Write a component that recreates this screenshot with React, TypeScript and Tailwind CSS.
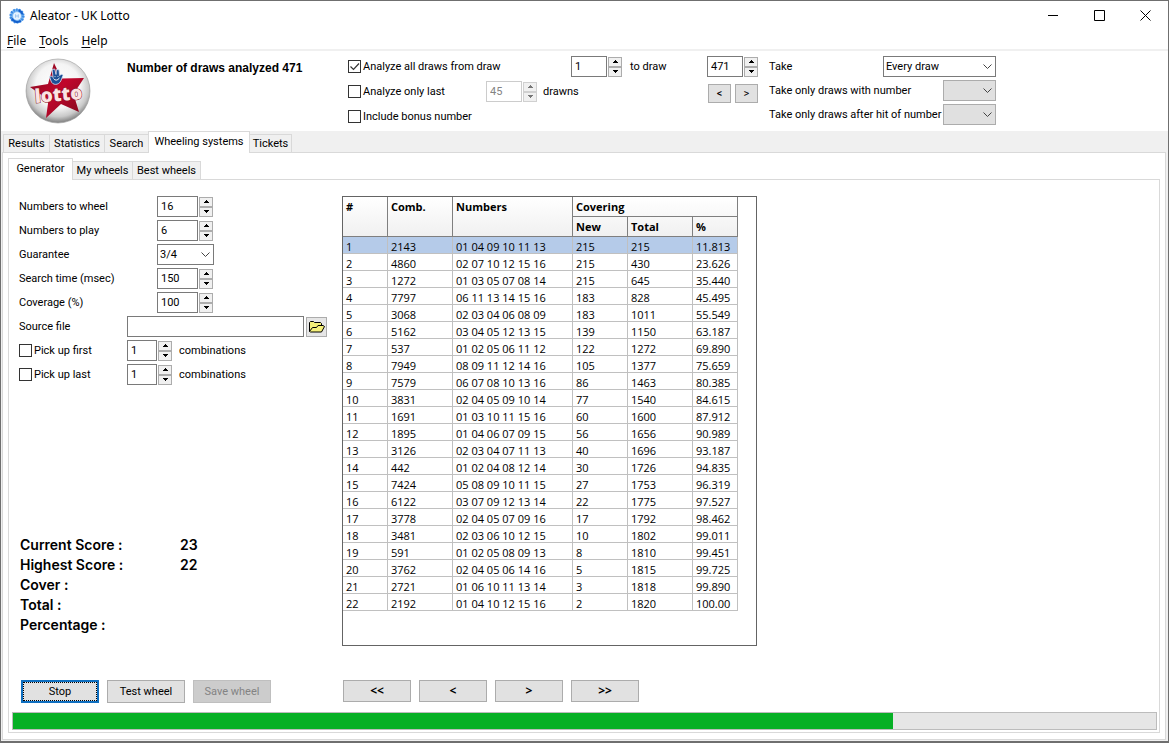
import { ReactNode, useState } from "react";
import { clsx } from "clsx";

const menus = ["File", "Tools", "Help"];

const mainTabs = [
  { name: "Results", width: "w-[47px]" },
  { name: "Statistics", width: "w-[56px]" },
  { name: "Search", width: "w-[45px]" },
  { name: "Wheeling systems", width: "w-[102px]" },
  { name: "Tickets", width: "w-[43px]" },
];

const wheelTabs = [
  { name: "Generator", width: "w-[65px]" },
  { name: "My wheels", width: "w-[61px]" },
  { name: "Best wheels", width: "w-[69px]" },
];

const rows = [
  ["1", "2143", "01 04 09 10 11 13", "215", "215", "11.813"],
  ["2", "4860", "02 07 10 12 15 16", "215", "430", "23.626"],
  ["3", "1272", "01 03 05 07 08 14", "215", "645", "35.440"],
  ["4", "7797", "06 11 13 14 15 16", "183", "828", "45.495"],
  ["5", "3068", "02 03 04 06 08 09", "183", "1011", "55.549"],
  ["6", "5162", "03 04 05 12 13 15", "139", "1150", "63.187"],
  ["7", "537", "01 02 05 06 11 12", "122", "1272", "69.890"],
  ["8", "7949", "08 09 11 12 14 16", "105", "1377", "75.659"],
  ["9", "7579", "06 07 08 10 13 16", "86", "1463", "80.385"],
  ["10", "3831", "02 04 05 09 10 14", "77", "1540", "84.615"],
  ["11", "1691", "01 03 10 11 15 16", "60", "1600", "87.912"],
  ["12", "1895", "01 04 06 07 09 15", "56", "1656", "90.989"],
  ["13", "3126", "02 03 04 07 11 13", "40", "1696", "93.187"],
  ["14", "442", "01 02 04 08 12 14", "30", "1726", "94.835"],
  ["15", "7424", "05 08 09 10 11 15", "27", "1753", "96.319"],
  ["16", "6122", "03 07 09 12 13 14", "22", "1775", "97.527"],
  ["17", "3778", "02 04 05 07 09 16", "17", "1792", "98.462"],
  ["18", "3481", "02 03 06 10 12 15", "10", "1802", "99.011"],
  ["19", "591", "01 02 05 08 09 13", "8", "1810", "99.451"],
  ["20", "3762", "02 04 05 06 14 16", "5", "1815", "99.725"],
  ["21", "2721", "01 06 10 11 13 14", "3", "1818", "99.890"],
  ["22", "2192", "01 04 10 12 15 16", "2", "1820", "100.00"],
];

const scores = [
  ["Current Score :", "23"],
  ["Highest Score :", "22"],
  ["Cover :", ""],
  ["Total :", ""],
  ["Percentage :", ""],
];

interface SpinProps {
  id: string;
  label?: string;
  value: string;
  width: string;
  disabled?: boolean;
}

function Spin({ id, label, value, width, disabled }: SpinProps) {
  const [val, setVal] = useState(value);
  const step = (n: number) => setVal(String(Number(val) + n));
  const button = clsx(
    "flex h-[10px] w-[14px] items-center justify-center border bg-[#f0f0f0]",
    disabled ? "border-[#d0d0d0] text-[#777]" : "border-[#acacac] text-black"
  );

  return (
    <div className="flex items-center gap-px">
      <input
        id={id}
        aria-label={label}
        value={val}
        disabled={disabled}
        onChange={(e) => setVal(e.target.value)}
        className={clsx(
          "h-[21px] border bg-white px-[3px] outline-none",
          width,
          disabled ? "border-[#cccccc] text-[#838383]" : "border-[#7a7a7a]"
        )}
      />
      <div className="flex flex-col">
        <button
          className={button}
          aria-label="Increase"
          disabled={disabled}
          onClick={() => step(1)}
        >
          <svg width="5" height="3" viewBox="0 0 5 3" fill="currentColor">
            <path d="M2 0h1v1h1v1h1v1H0V2h1V1h1z" />
          </svg>
        </button>
        <button
          className={button}
          aria-label="Decrease"
          disabled={disabled}
          onClick={() => step(-1)}
        >
          <svg width="5" height="3" viewBox="0 0 5 3" fill="currentColor">
            <path d="M0 0h5v1H4v1H3v1H2V2H1V1H0z" />
          </svg>
        </button>
      </div>
    </div>
  );
}

interface DropProps {
  id: string;
  options: string[];
  width: string;
  disabled?: boolean;
}

function Drop({ id, options, width, disabled }: DropProps) {
  return (
    <div className={clsx("relative", width)}>
      <select
        id={id}
        disabled={disabled}
        className={clsx(
          "block h-[21px] w-full appearance-none border pl-[2px] pr-4 outline-none",
          disabled ? "border-[#acacac] bg-[#e0e0e0]" : "border-[#7a7a7a] bg-white"
        )}
      >
        {options.map((option) => (
          <option key={option}>{option}</option>
        ))}
      </select>
      <svg
        className="pointer-events-none absolute right-1 top-2"
        width="9"
        height="6"
        viewBox="0 0 9 6"
        fill="none"
        stroke="#444"
      >
        <path d="M.5.5l4 4 4-4" />
      </svg>
    </div>
  );
}

interface CheckProps {
  label: string;
  width?: string;
  initial?: boolean;
}

function Check({ label, width, initial = false }: CheckProps) {
  const [checked, setChecked] = useState(initial);

  return (
    <label className={clsx("relative flex items-center gap-[2px]", width)}>
      <input
        type="checkbox"
        checked={checked}
        onChange={() => setChecked(!checked)}
        className="size-[13px] shrink-0 appearance-none border border-[#333] bg-white"
      />
      {checked && (
        <svg
          className="pointer-events-none absolute left-0"
          width="13"
          height="13"
          viewBox="0 0 13 13"
          fill="none"
          stroke="#333"
          strokeWidth="1.2"
        >
          <path d="M2.5 6.5l3 3 5.5-6" />
        </svg>
      )}
      <span className="whitespace-nowrap">{label}</span>
    </label>
  );
}

interface TabsProps {
  tabs: { name: string; width: string }[];
  initial: string;
}

function Tabs({ tabs, initial }: TabsProps) {
  const [active, setActive] = useState(initial);

  return (
    <div role="tablist" className="flex items-end">
      {tabs.map(({ name, width }) => (
        <button
          key={name}
          role="tab"
          aria-selected={name === active}
          onClick={() => setActive(name)}
          className={clsx(
            "relative -mr-px whitespace-nowrap border border-[#d9d9d9] text-center",
            width,
            name === active
              ? "z-10 -mb-px h-[22px] border-b-0 bg-white pb-[2px]"
              : "h-[18px] border-b-0 bg-[#f0f0f0]"
          )}
        >
          {name}
        </button>
      ))}
    </div>
  );
}

function AppIcon() {
  return (
    <svg width="16" height="16" viewBox="0 0 16 16" fill="none">
      <circle cx="8" cy="8" r="5.4" stroke="#7db9f2" strokeWidth="3.6" />
      <circle
        cx="8"
        cy="8"
        r="6.3"
        stroke="#3b8be6"
        strokeWidth="2.6"
        strokeDasharray="1.6 1.2"
      />
      <path d="M2.800 10.500a6 6 0 0 0 9 2.200" stroke="#1660cc" strokeWidth="2" />
      <path d="M9.500 2.300a6 6 0 0 1 4 4" stroke="#1660cc" strokeWidth="2" />
      <circle cx="8" cy="8" r="3.8" fill="#e6f3ff" />
      <path d="M6.6 6.3v3.4M9.3 6.3v3.4M6.6 8h2.7" stroke="#9cc4ee" />
    </svg>
  );
}

function LottoLogo() {
  return (
    <svg width="66" height="66" viewBox="0 0 66 66" role="img" aria-label="Lotto">
      <defs>
        <radialGradient id="ball" cx="50%" cy="42%" r="56%">
          <stop offset="0" stopColor="#ffffff" />
          <stop offset=".62" stopColor="#f4f4f4" />
          <stop offset=".86" stopColor="#c9c9c9" />
          <stop offset="1" stopColor="#8c8c8c" />
        </radialGradient>
        <linearGradient id="star" x1="0" y1="0" x2="1" y2="1">
          <stop offset="0" stopColor="#7a0c1c" />
          <stop offset=".5" stopColor="#c1062c" />
          <stop offset="1" stopColor="#7d0a1c" />
        </linearGradient>
      </defs>
      <circle cx="33" cy="33" r="32" fill="url(#ball)" stroke="#999" strokeWidth=".6" />
      <path
        d="M29 5l7.500 15.500L59 20 48.500 36 54 54 36 46 21 60l2.500-18L5 29l18-3z"
        fill="url(#star)"
      />
      <path
        d="M24.500 18.500l2-.5 1.500 1.500-.8-8 2.600-.5 1.200 5.500.5-5 2.600.3.400 5.700 2.500-1.500 1 1.500-2.200 5.500c-2.200 4.500-8.500 4.500-9.800 0z"
        fill="#1d4f96"
        stroke="#dce9f7"
        strokeWidth=".8"
      />
      <path
        d="M28.500 20.500q2.500 3.500 6-.5M30 18.300v.8M33 17.900v.8"
        fill="none"
        stroke="#fff"
      />
      <text
        x="34"
        y="43"
        textAnchor="middle"
        transform="rotate(-5 34 43)"
        fontFamily="'Open Sans', sans-serif"
        fontWeight="800"
        fontSize="19"
        fill="#fbe3e3"
        stroke="#8a0f20"
        strokeWidth="1"
        paintOrder="stroke"
      >
        lotto
      </text>
    </svg>
  );
}

function WindowButton({ label, children }: { label: string; children: ReactNode }) {
  return (
    <button
      aria-label={label}
      className="flex h-[29px] w-[46px] items-center justify-center hover:bg-gray-200"
    >
      <svg width="11" height="11" viewBox="0 0 11 11" fill="none" stroke="#000">
        {children}
      </svg>
    </button>
  );
}

function TitleBar() {
  return (
    <div className="flex items-center justify-between pl-2 font-['Noto_Sans',sans-serif] text-[12px]">
      <div className="flex items-center gap-[5px]">
        <AppIcon />
        <span>Aleator - UK Lotto</span>
      </div>
      <div className="flex">
        <WindowButton label="Minimize">
          <path d="M0 5.500h10" />
        </WindowButton>
        <WindowButton label="Maximize">
          <path d="M.5.5h10v10H.5z" />
        </WindowButton>
        <WindowButton label="Close">
          <path d="M.5.5l10 10M10.500.5l-10 10" />
        </WindowButton>
      </div>
    </div>
  );
}

function Header() {
  return (
    <header className="flex h-20 pt-[5px]">
      <div className="w-[126px] shrink-0 pl-6 pt-[2px]">
        <LottoLogo />
      </div>
      <h1 className="w-[221px] shrink-0 whitespace-nowrap pt-1 font-['Liberation_Sans',sans-serif] text-[12px] font-bold">
        Number of draws analyzed 471
      </h1>

      <div className="flex w-[359px] shrink-0 flex-col gap-1">
        <div className="flex h-[21px] items-center">
          <Check label="Analyze all draws from draw" width="w-[223px]" initial />
          <Spin id="from-draw" label="From draw" value="1" width="w-[36px]" />
          <label htmlFor="to-draw" className="ml-2">
            to draw
          </label>
        </div>
        <div className="flex h-[21px] items-center">
          <Check label="Analyze only last" width="w-[138px]" />
          <Spin id="last-draws" value="45" width="w-[36px]" disabled />
          <label htmlFor="last-draws" className="ml-[6px]">
            drawns
          </label>
        </div>
        <div className="flex h-[21px] items-center">
          <Check label="Include bonus number" />
        </div>
      </div>

      <div className="flex w-[62px] shrink-0 flex-col gap-[7px]">
        <Spin id="to-draw" value="471" width="w-[36px]" />
        <div className="flex gap-1 pl-px">
          <button
            aria-label="Previous draw"
            className="h-[19px] w-[23px] border border-[#acacac] bg-[#e1e1e1]"
          >
            &lt;
          </button>
          <button
            aria-label="Next draw"
            className="h-[19px] w-[23px] border border-[#acacac] bg-[#e1e1e1]"
          >
            &gt;
          </button>
        </div>
      </div>

      <div className="flex w-[227px] shrink-0 flex-col gap-[3px] whitespace-nowrap">
        <div className="flex items-center justify-between">
          <label htmlFor="take">Take</label>
          <Drop id="take" options={["Every draw"]} width="w-[113px]" />
        </div>
        <div className="flex items-center justify-between">
          <label htmlFor="with-number">Take only draws with number</label>
          <Drop id="with-number" options={[]} width="w-[53px]" disabled />
        </div>
        <div className="flex items-center justify-between">
          <label htmlFor="after-hit">Take only draws after hit of number</label>
          <Drop id="after-hit" options={[]} width="w-[53px]" disabled />
        </div>
      </div>
    </header>
  );
}

function Field({ id, label, children }: { id: string; label: string; children: ReactNode }) {
  return (
    <div className="flex h-[21px] items-center">
      <label htmlFor={id} className="w-[138px]">
        {label}
      </label>
      {children}
    </div>
  );
}

function GeneratorForm() {
  return (
    <form className="flex flex-col gap-[3px]" onSubmit={(e) => e.preventDefault()}>
      <Field id="wheel" label="Numbers to wheel">
        <Spin id="wheel" value="16" width="w-[41px]" />
      </Field>
      <Field id="play" label="Numbers to play">
        <Spin id="play" value="6" width="w-[41px]" />
      </Field>
      <Field id="guarantee" label="Guarantee">
        <Drop id="guarantee" options={["3/4"]} width="w-[57px]" />
      </Field>
      <Field id="time" label="Search time (msec)">
        <Spin id="time" value="150" width="w-[41px]" />
      </Field>
      <Field id="coverage" label="Coverage (%)">
        <Spin id="coverage" value="100" width="w-[41px]" />
      </Field>
      <div className="flex h-[21px] items-center">
        <label htmlFor="source" className="w-[108px]">
          Source file
        </label>
        <input
          id="source"
          className="h-[21px] w-[177px] border border-[#7a7a7a] bg-white px-[3px] outline-none"
        />
        <button
          aria-label="Open file"
          className="ml-[2px] flex h-5 w-[21px] items-center justify-center border border-[#acacac] bg-[#e6e6e6]"
        >
          <svg width="16" height="13" viewBox="0 0 16 13" stroke="#000" fill="#f5f07a">
            <path d="M.5 11.500v-9l1-1h3l1 1h6l1 1v2" />
            <path d="M.5 11.500l3-4h4l1.500-2h5l1.500 1-3 5.500h-11z" />
          </svg>
        </button>
      </div>
      {["first", "last"].map((side) => (
        <div key={side} className="flex h-[21px] items-center">
          <Check label={`Pick up ${side}`} width="w-[108px]" />
          <Spin id={`pick-${side}`} value="1" width="w-[30px]" />
          <label htmlFor={`pick-${side}`} className="ml-[7px]">
            combinations
          </label>
        </div>
      ))}
    </form>
  );
}

function WheelTable() {
  const head =
    "border-b border-r border-[#7f7f7f] pl-[3px] text-left align-top font-bold leading-[19px]";

  return (
    <div className="border border-[#646464] bg-white pb-[34px] pr-[18px] font-['Open_Sans',sans-serif]">
      <table className="w-[395px] table-fixed border-separate border-spacing-0">
        <colgroup>
          <col className="w-[45px]" />
          <col className="w-[65px]" />
          <col className="w-[120px]" />
          <col className="w-[55px]" />
          <col className="w-[65px]" />
          <col className="w-[45px]" />
        </colgroup>
        <thead className="bg-linear-to-b from-white to-[#f0f0f0]">
          <tr className="h-5">
            <th rowSpan={2} className={head}>
              #
            </th>
            <th rowSpan={2} className={head}>
              Comb.
            </th>
            <th rowSpan={2} className={head}>
              Numbers
            </th>
            <th colSpan={3} className={head}>
              Covering
            </th>
          </tr>
          <tr className="h-5">
            <th className={head}>New</th>
            <th className={head}>Total</th>
            <th className={head}>%</th>
          </tr>
        </thead>
        <tbody>
          {rows.map((row, i) => (
            <tr key={row[0]} className={i === 0 ? "bg-[#b5cbe9]" : "bg-white"}>
              {row.map((cell, j) => (
                <td
                  key={j}
                  className="h-[17px] whitespace-nowrap border-b border-r border-[#c0c0c0] pl-[3px] pt-1 leading-3"
                >
                  {cell}
                </td>
              ))}
            </tr>
          ))}
        </tbody>
      </table>
    </div>
  );
}

function Actions() {
  const button = "h-[23px] w-[78px] border text-center";
  const pager = "h-[22px] w-[68px] border border-[#acacac] bg-[#e1e1e1] font-bold";

  return (
    <div className="flex items-start pt-[34px]">
      <div className="flex w-[323px] gap-2 pl-[2px]">
        <button className="h-[23px] w-[78px] border-2 border-[#0f6fc0] bg-[#e1e1e1]">
          <span className="block h-full border border-dotted border-black leading-[17px]">
            Stop
          </span>
        </button>
        <button className={clsx(button, "border-[#acacac] bg-[#e1e1e1]")}>
          Test wheel
        </button>
        <button
          disabled
          className={clsx(button, "border-[#bfbfbf] bg-[#cccccc] text-[#838383]")}
        >
          Save wheel
        </button>
      </div>
      <div className="flex gap-2 pl-px font-['Noto_Sans',sans-serif] text-[12px]">
        {["<<", "<", ">", ">>"].map((sign) => (
          <button key={sign} className={pager}>
            {sign}
          </button>
        ))}
      </div>
    </div>
  );
}

export default function App() {
  const progress = 77;

  return (
    <div className="flex min-h-screen flex-col border border-b-2 border-[#6f6f6f] bg-white font-['Roboto',sans-serif] text-[11px] leading-4 text-black">
      <TitleBar />
      <nav className="flex h-[19px] items-end gap-[13px] pl-[6px] font-['Noto_Sans',sans-serif] text-[12px]">
        {menus.map((menu) => (
          <button key={menu}>
            <span className="underline underline-offset-2">{menu[0]}</span>
            {menu.slice(1)}
          </button>
        ))}
      </nav>
      <div className="h-[2px] bg-[#f0f0f0]" />
      <Header />

      <div className="flex grow flex-col bg-[#f0f0f0] pb-px pl-px pr-[2px]">
        <div className="pl-px">
          <Tabs tabs={mainTabs} initial="Wheeling systems" />
        </div>
        <main className="flex grow flex-col border border-[#d9d9d9] bg-white px-[5px] pb-[6px] pt-[5px]">
          <Tabs tabs={wheelTabs} initial="Generator" />
          <section className="flex grow flex-col border border-[#d9d9d9] pb-[2px] pl-[3px] pr-[2px] pt-4">
            <div className="flex pl-[7px]">
              <div className="flex w-[323px] shrink-0 flex-col justify-between pb-[11px]">
                <GeneratorForm />
                <dl className="pl-px font-['Inter',sans-serif] text-[14px] font-semibold leading-5">
                  {scores.map(([name, value]) => (
                    <div key={name} className="flex">
                      <dt className="w-[160px]">{name}</dt>
                      <dd>{value}</dd>
                    </div>
                  ))}
                </dl>
              </div>
              <WheelTable />
            </div>
            <div className="pl-[7px]">
              <Actions />
            </div>
            <div
              role="progressbar"
              aria-label="Search progress"
              aria-valuenow={progress}
              className="mt-auto h-[18px] border border-[#bcbcbc] bg-[#e6e6e6]"
            >
              <div className="h-full bg-[#06b025]" style={{ width: `${progress}%` }} />
            </div>
          </section>
        </main>
      </div>
    </div>
  );
}
